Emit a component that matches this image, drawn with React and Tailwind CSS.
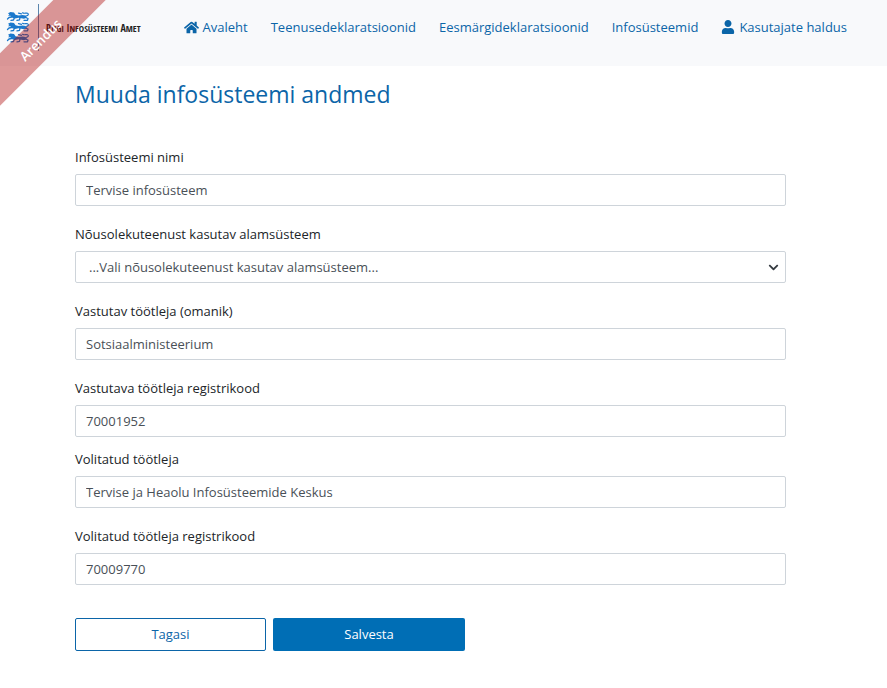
import { FaChevronDown, FaHome, FaUser } from 'react-icons/fa';

const NAV = [
  { label: 'Avaleht', Icon: FaHome, iconClass: 'mr-1 size-[15px]' },
  { label: 'Teenusedeklaratsioonid' },
  { label: 'Eesmärgideklaratsioonid' },
  { label: 'Infosüsteemid' },
  { label: 'Kasutajate haldus', Icon: FaUser, iconClass: 'mr-1 h-[14px] w-[14px]' },
];

function Lion() {
  return (
    <g fill="none" stroke="#1a78cc" strokeLinecap="round" strokeLinejoin="round">
      <path fill="#1a78cc" stroke="none" d="M1.500 1.200 L4 0 L7.500 .5 L9 2.800 L12 3.500 L16 3 L19 3.500 L20.500 5.500 L17.500 6.800 L12 5.800 L8.500 6.500 L5 5.500 L4 3.800 L1.500 3.800 L2.800 2.500 Z" />
      <path strokeWidth="1.300" d="M5 5 L2.500 5.500 L1 7 M8 5.500 L7 8 L4.500 8.300 M13.500 5.500 L13 7.800 L10.500 8.300 M19 5.500 L21.500 6.500 L21 8.300 L17.500 8.300" />
      <path strokeWidth="1.200" d="M19.500 4 C22 3.500 22.500 2 21 1.200 C19.500 .6 18 2 16 .8 M12 1.200 L15 1.800" />
    </g>
  );
}

function Logo() {
  return (
    <a href="#avaleht" className="flex items-start text-[#222]">
      <svg className="h-[54px] w-[34px]" viewBox="0 0 34 54" aria-hidden="true">
        <g transform="translate(0.500 12)"><Lion /></g>
        <g transform="translate(0.500 22.500)"><Lion /></g>
        <g transform="translate(0.500 33.500)"><Lion /></g>
        <path d="M32.5 4 V51" stroke="#5b86ad" strokeWidth="1" />
      </svg>
      <span className="mt-[22px] ml-[6px] whitespace-nowrap font-['Open_Sans_Condensed','Liberation_Sans_Narrow',sans-serif] text-[10px] leading-3 font-bold">
        R<span className="text-[9px]">IIGI</span> I<span className="text-[9px]">NFOSÜSTEEMI</span> A<span className="text-[9px]">MET</span>
      </span>
    </a>
  );
}

function Field({ id, label, value, className = 'mb-[18px]' }) {
  return (
    <div className={className}>
      <label htmlFor={id} className="mb-[7px] block text-[#212529]">{label}</label>
      <input id={id} type="text" defaultValue={value} className="block h-8 w-full rounded-xs border border-[#ced4da] bg-white px-[10px] text-[#495057] outline-none focus:border-[#006eb5]" />
    </div>
  );
}

export default function App() {
  return (
    <div className="relative min-h-screen overflow-x-hidden bg-white font-['Open_Sans',sans-serif] text-[13px] leading-5">
      <header className="flex h-[66px] items-start justify-between bg-[#f8f9fb] pr-10 pl-[6px]">
        <Logo />
        <nav className="flex gap-[23px] pt-[17px] whitespace-nowrap text-[#0b65a8]">
          {NAV.map(({ label, Icon, iconClass }) => (
            <a key={label} href="#nav" className="flex items-center">
              {Icon && <Icon className={iconClass} />}
              {label}
            </a>
          ))}
        </nav>
      </header>

      <div className="pointer-events-none absolute top-[21px] left-[-60px] flex h-[37px] w-[200px] -rotate-45 items-center justify-center bg-[#aa0000]/40 text-white">
        <span className="font-semibold">Arendus</span>
      </div>

      <main className="pr-[101px] pl-[75px]">
        <h1 className="pt-3 text-[23px] leading-8 text-[#0b65a8]">Muuda infosüsteemi andmed</h1>
        <form className="pt-[37px]" onSubmit={(e) => e.preventDefault()}>
          <Field id="nimi" label="Infosüsteemi nimi" value="Tervise infosüsteem" />
          <div className="mb-[18px]">
            <label htmlFor="alam" className="mb-[7px] block text-[#212529]">Nõusolekuteenust kasutav alamsüsteem</label>
            <div className="relative">
              <select id="alam" className="block h-8 w-full appearance-none rounded-xs border border-[#ced4da] bg-white px-[13px] text-[#495057] outline-none focus:border-[#006eb5]">
                <option>...Vali nõusolekuteenust kasutav alamsüsteem...</option>
              </select>
              <FaChevronDown className="pointer-events-none absolute top-[11px] right-[7px] size-[11px] text-[#343a40]" />
            </div>
          </div>
          <Field id="omanik" label="Vastutav töötleja (omanik)" value="Sotsiaalministeerium" />
          <Field id="kood" label="Vastutava töötleja registrikood" value="70001952" className="mb-3" />
          <Field id="volitatud" label="Volitatud töötleja" value="Tervise ja Heaolu Infosüsteemide Keskus" />
          <Field id="vkood" label="Volitatud töötleja registrikood" value="70009770" className="mb-[33px]" />
          <div className="flex gap-[7px]">
            <button type="button" className="h-[33px] w-[191px] rounded-xs border border-[#0b65a8] bg-white pb-px text-[#0b65a8]">Tagasi</button>
            <button type="submit" className="h-[33px] w-[192px] rounded-xs bg-[#006eb5] pb-px font-medium text-white">Salvesta</button>
          </div>
        </form>
      </main>
    </div>
  );
}
